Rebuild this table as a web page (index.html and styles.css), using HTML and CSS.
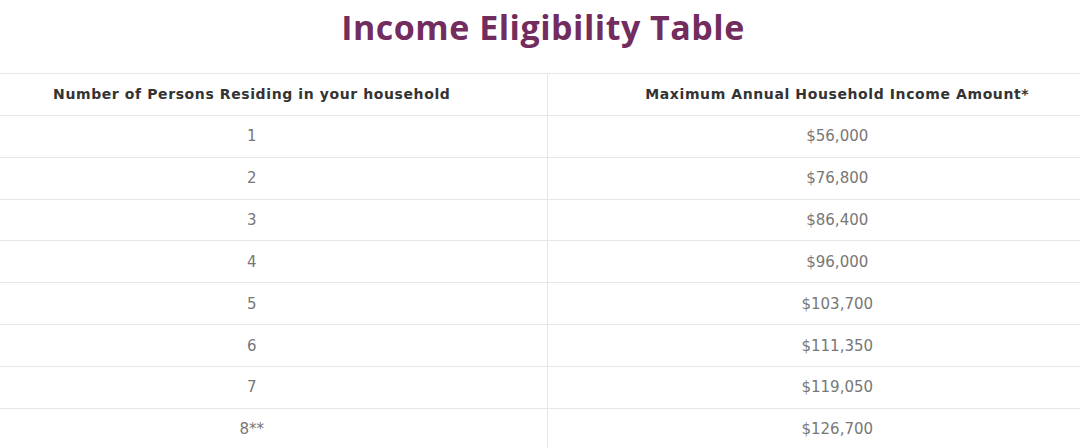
FILE: index.html
```html
<!DOCTYPE html>
<html>
<head>
<meta charset="utf-8">
<link rel="stylesheet" href="styles.css">
</head>
<body>
<h1 class="title">Income Eligibility Table</h1>
<table class="tbl">
  <thead>
    <tr><th class="c1">Number of Persons Residing in your household</th><th class="c2">Maximum Annual Household Income Amount*</th></tr>
  </thead>
  <tbody>
    <tr><td class="c1">1</td><td class="c2">$56,000</td></tr>
    <tr><td class="c1">2</td><td class="c2">$76,800</td></tr>
    <tr><td class="c1">3</td><td class="c2">$86,400</td></tr>
    <tr><td class="c1">4</td><td class="c2">$96,000</td></tr>
    <tr><td class="c1">5</td><td class="c2">$103,700</td></tr>
    <tr><td class="c1">6</td><td class="c2">$111,350</td></tr>
    <tr><td class="c1">7</td><td class="c2">$119,050</td></tr>
    <tr><td class="c1">8**</td><td class="c2">$126,700</td></tr>
  </tbody>
</table>
</body>
</html>
```
FILE: styles.css
```css
html, body {
  margin: 0;
  padding: 0;
  background: #ffffff;
}
body {
  font-family: "DejaVu Sans", "Noto Sans", sans-serif;
  overflow: hidden;
}
.title {
  margin: 0;
  height: 73px;
  box-sizing: border-box;
  padding-top: 6px;
  padding-left: 6px;
  text-align: center;
  font-family: "Open Sans", "DejaVu Sans", sans-serif;
  font-size: 34px;
  font-weight: 700;
  color: #722c5e;
  line-height: 42px;
  letter-spacing: 0.5px;
}
.tbl {
  width: 100%;
  border-collapse: collapse;
  table-layout: fixed;
}
.tbl th, .tbl td {
  height: 41.86px;
  padding: 0;
  text-align: center;
  border-top: 1px solid #e6e6e6;
  border-bottom: 1px solid #e6e6e6;
  box-sizing: border-box;
}
.tbl .c1 {
  width: 547px;
  padding-right: 43px;
  border-right: 1px solid #e6e6e6;
}
.tbl .c2 {
  padding-left: 47px;
}
.tbl th {
  font-size: 14px;
  font-weight: 700;
  color: #333333;
  letter-spacing: 0.6px;
}
.tbl td {
  font-size: 15px;
  font-weight: 400;
  color: #777777;
}
```
